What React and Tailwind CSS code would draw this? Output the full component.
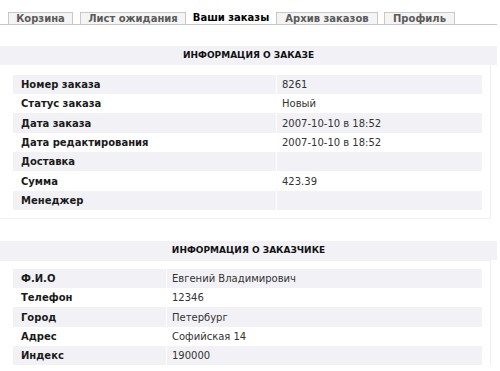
import React from "react";

const order = [
  ["Номер заказа", "8261"],
  ["Статус заказа", "Новый"],
  ["Дата заказа", "2007-10-10 в 18:52"],
  ["Дата редактирования", "2007-10-10 в 18:52"],
  ["Доставка", ""],
  ["Сумма", "423.39"],
  ["Менеджер", ""],
];
const heights1 = ["h-[19px]", "h-[19px]", "h-[20px]", "h-[19px]", "h-[19px]", "h-[20px]", "h-[19px]"];

const customer = [
  ["Ф.И.О", "Евгений Владимирович"],
  ["Телефон", "12346"],
  ["Город", "Петербург"],
  ["Адрес", "Софийская 14"],
  ["Индекс", "190000"],
];
const heights2 = ["h-[19px]", "h-[19px]", "h-[20px]", "h-[19px]", "h-[19px]"];

function Rows({ data, heights, labelW }) {
  return (
    <div className="flex flex-col">
      {data.map(([k, v], i) => {
        const bg = i % 2 === 0 ? "bg-[#f2f2f6]" : "bg-white";
        return (
          <div key={k} className={`flex ${heights[i]}`}>
            <div
              className={`${labelW} ${bg} flex items-center pl-[8px] font-bold text-[#1a1a1a] text-[10px]`}
            >
              {k}
            </div>
            <div className="w-px bg-white" />
            <div className={`flex-1 ${bg} flex items-center pl-[5px] text-[#333] text-[10px]`}>
              {v}
            </div>
          </div>
        );
      })}
    </div>
  );
}

export default function App() {
  return (
    <div
      className="w-[500px] h-[371px] bg-white overflow-hidden"
      style={{ fontFamily: '"DejaVu Sans", Verdana, sans-serif' }}
    >
      {/* tabs */}
      <div className="pt-[12px] w-[497px] border-b border-[#c8c8c8] flex text-[10px] font-bold leading-[12px]">
        <div className="ml-[8px] w-[65px] h-[12px] bg-[#f4f4f4] border-t border-x border-[#c8c8c8] text-[#5a5a5a] text-center">
          Корзина
        </div>
        <div className="ml-[7px] w-[106px] h-[12px] bg-[#f4f4f4] border-t border-x border-[#c8c8c8] text-[#5a5a5a] text-center">
          Лист ожидания
        </div>
        <div className="w-[90px] h-[12px] text-black text-center">Ваши заказы</div>
        <div className="w-[102px] h-[12px] bg-[#f4f4f4] border-t border-x border-[#c8c8c8] text-[#5a5a5a] text-center">
          Архив заказов
        </div>
        <div className="ml-[6px] w-[71px] h-[12px] bg-[#f4f4f4] border-t border-x border-[#c8c8c8] text-[#5a5a5a] text-center">
          Профиль
        </div>
      </div>

      {/* section 1 */}
      <div className="mt-[21px] w-[497px] h-[19px] bg-[#f2f2f6] flex items-center justify-center text-[9px] font-bold text-[#111] uppercase">
        Информация о заказе
      </div>
      <div className="w-[491px] border-r border-b border-[#efeff2] pt-[10px] pb-[8px] pl-[13px] pr-[8px]">
        <Rows data={order} heights={heights1} labelW="w-[263px]" />
      </div>

      {/* section 2 */}
      <div className="mt-[22px] w-[497px] h-[19px] bg-[#f2f2f6] flex items-center justify-center text-[9px] font-bold text-[#111] uppercase">
        Информация о заказчике
      </div>
      <div className="w-[491px] border-r border-t border-[#efeff2] pt-[8px] pl-[13px] pr-[8px]">
        <Rows data={customer} heights={heights2} labelW="w-[153px]" />
      </div>
    </div>
  );
}
